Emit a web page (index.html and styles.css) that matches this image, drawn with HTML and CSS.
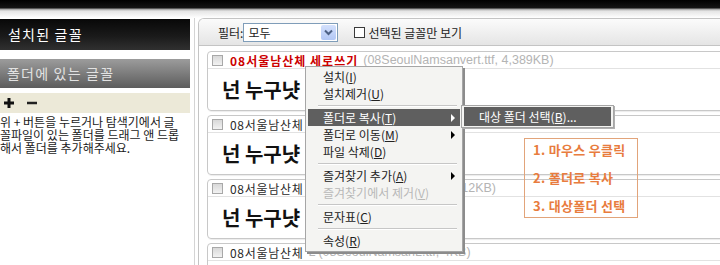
FILE: index.html
```html
<!DOCTYPE html>
<html>
<head>
    <title>글꼴 관리자</title>
    <meta charset="utf-8">
    <link rel="stylesheet" href="styles.css">
</head>
<body>
    <div class="topbar"></div>
    <div class="layout">
        <aside class="sidebar">
            <div class="side-tab installed">설치된 글꼴</div>
            <div class="side-tab folder">폴더에 있는 글꼴</div>
            <div class="side-tools">
                <svg width="12" height="12" viewBox="0 0 12 12"><path d="M6 1v10M1 6h10" stroke="#111" stroke-width="3"/></svg>
                <svg width="12" height="12" viewBox="0 0 12 12"><path d="M1 6h10" stroke="#222" stroke-width="2.5"/></svg>
            </div>
            <p class="side-help">위 + 버튼을 누르거나 탐색기에서 글<br>꼴파일이 있는 폴더를 드래그 앤 드롭<br>해서 폴더를 추가해주세요.</p>
        </aside>

        <main class="panel">
            <div class="filter-bar">
                <span class="filter-label">필터:</span>
                <div class="select">
                    <span class="select-value">모두</span>
                    <span class="select-btn">
                        <svg width="9" height="7" viewBox="0 0 9 7"><path d="M1 1.5l3.5 3.5 3.5-3.5" fill="none" stroke="#4d6185" stroke-width="2"/></svg>
                    </span>
                </div>
                <label class="only-selected"><span class="check white"></span>선택된 글꼴만 보기</label>
            </div>

            <div class="font-list">
                <div class="font-card">
                    <div class="font-head">
                        <span class="check"></span>
                        <span class="font-name selected">08서울남산체 세로쓰기</span>
                        <span class="font-file">(08SeoulNamsanvert.ttf, 4,389KB)</span>
                    </div>
                    <div class="font-preview">넌 누구냣</div>
                </div>
                <div class="font-card">
                    <div class="font-head">
                        <span class="check"></span>
                        <span class="font-name">08서울남산체</span>
                        <span class="font-file">B (08SeoulNamsanB.ttf)</span>
                    </div>
                    <div class="font-preview">넌 누구냣</div>
                </div>
                <div class="font-card">
                    <div class="font-head">
                        <span class="check"></span>
                        <span class="font-name">08서울남산체</span>
                        <span class="font-file">EB (08SeoulNamsanB.ttf, 412KB)</span>
                    </div>
                    <div class="font-preview">넌 누구냣</div>
                </div>
                <div class="font-card">
                    <div class="font-head">
                        <span class="check"></span>
                        <span class="font-name">08서울남산체</span>
                        <span class="font-file">L (08SeoulNamsanL.ttf, 4KB)</span>
                    </div>
                    <div class="font-preview">넌 누구냣</div>
                </div>
            </div>
        </main>
    </div>

    <!-- 우클릭 메뉴 -->
    <div class="ctx-menu">
        <div class="ctx-item">설치(<u>I</u>)</div>
        <div class="ctx-item">설치제거(<u>U</u>)</div>
        <div class="ctx-sep"></div>
        <div class="ctx-item sub active">폴더로 복사(<u>T</u>)</div>
        <div class="ctx-item sub">폴더로 이동(<u>M</u>)</div>
        <div class="ctx-item">파일 삭제(<u>D</u>)</div>
        <div class="ctx-sep"></div>
        <div class="ctx-item sub">즐겨찾기 추가(<u>A</u>)</div>
        <div class="ctx-item disabled">즐겨찾기에서 제거(<u>V</u>)</div>
        <div class="ctx-sep"></div>
        <div class="ctx-item">문자표(<u>C</u>)</div>
        <div class="ctx-sep"></div>
        <div class="ctx-item">속성(<u>R</u>)</div>
    </div>

    <div class="ctx-menu submenu">
        <div class="ctx-item active">대상 폴더 선택(<u>B</u>)...</div>
    </div>

    <div class="guide">
        <p>1. 마우스 우클릭</p>
        <p>2. 폴더로 복사</p>
        <p>3. 대상폴더 선택</p>
    </div>
</body>
</html>
```

FILE: styles.css
```css
body {
    margin: 0;
    width: 720px;
    height: 265px;
    overflow: hidden;
    position: relative;
    background: #fff;
    font-family: "Noto Sans CJK KR", sans-serif;
    font-size: 12px;
    color: #222;
}
.topbar {
    height: 18px;
    background: linear-gradient(#000 0, #141414 8px, #9a9a9a 9px, #e4e4e4 11px, #fff 18px);
}
.layout {
    display: flex;
    height: 247px;
}

/* 왼쪽 */
.sidebar {
    width: 195px;
    box-sizing: border-box;
    border-right: 1px solid #d4d4d4;
    padding-top: 1px;
}
.side-tab {
    width: 190px;
    box-sizing: border-box;
    padding-left: 8px;
    font-size: 14px;
    letter-spacing: 1.2px;
}
.side-tab.installed {
    height: 31px;
    line-height: 31px;
    color: #fff;
    background: linear-gradient(#080808, #1a1a1a 55%, #303030);
}
.side-tab.folder {
    height: 29px;
    line-height: 29px;
    margin-top: 9px;
    padding-left: 7px;
    color: #e2e2e2;
    background: linear-gradient(#9c9c9c, #7c7c7c 50%, #5c5c5c);
}
.side-tools {
    width: 190px;
    height: 20px;
    margin-top: 5px;
    padding-left: 3px;
    box-sizing: border-box;
    background: #ece9d8;
    display: flex;
    align-items: center;
    gap: 11px;
}
.side-help {
    margin: 2px 0 0;
    font-size: 12px;
    line-height: 13px;
    color: #1a1a1a;
    white-space: nowrap;
}

/* 오른쪽 */
.panel {
    flex: 1;
    margin-left: 3px;
    border-left: 1px solid #c4c4c4;
    border-top: 1px solid #c4c4c4;
    border-top-left-radius: 6px;
    overflow: hidden;
}
.filter-bar {
    height: 26px;
    display: flex;
    align-items: center;
    padding-left: 19px;
    background: linear-gradient(#fbfbfb, #e5e5e5);
    border-bottom: 1px solid #c4c4c4;
}
.select {
    width: 95px;
    height: 19px;
    box-sizing: border-box;
    border: 1px solid #7f9db9;
    background: #fff;
    display: flex;
    align-items: center;
    justify-content: space-between;
    padding-left: 4px;
}
.select-btn {
    width: 15px;
    height: 15px;
    margin-right: 1px;
    border-radius: 2px;
    background: linear-gradient(#d3e0fc, #b2c7f5);
    display: flex;
    align-items: center;
    justify-content: center;
}
.only-selected {
    margin-left: 16px;
    display: flex;
    align-items: center;
    gap: 3px;
}
.check {
    width: 11px;
    height: 11px;
    box-sizing: border-box;
    border: 1px solid #a8a8a8;
    background: linear-gradient(#d8d8d8, #f2f2f2);
    flex: none;
}
.check.white {
    border-color: #3a3a3a;
    background: #fff;
}

.font-list {
    padding: 5px 0 0 8px;
}
.font-card {
    width: 560px;
    height: 60px;
    box-sizing: border-box;
    border: 1px solid #c8c8c8;
    border-radius: 4px;
    margin-bottom: 4px;
    box-shadow: 1px 1px 1px rgba(0, 0, 0, 0.08);
}
.font-head {
    height: 16px;
    display: flex;
    align-items: center;
    padding-left: 4px;
    border-bottom: 1px solid #e2e2e2;
    white-space: nowrap;
}
.font-name {
    margin-left: 7px;
    letter-spacing: 0.7px;
    color: #2a2a2a;
}
.font-name.selected {
    color: #cc0000;
    font-weight: bold;
    letter-spacing: 1px;
}
.font-file {
    margin-left: 5px;
    color: #b4b4b4;
    font-family: "Liberation Sans", "Noto Sans CJK KR", sans-serif;
    font-size: 12.5px;
}
.font-preview {
    height: 41px;
    line-height: 41px;
    padding-left: 14px;
    font-size: 20px;
    font-weight: bold;
    color: #111;
}

/* 메뉴 */
.ctx-menu {
    position: absolute;
    left: 305px;
    top: 66px;
    width: 158px;
    box-sizing: border-box;
    padding: 1px 2px 2px;
    border: 1px solid #a6a6a6;
    background: #f4f4f2;
    box-shadow: 2px 2px 0 #8c8c8c;
}
.ctx-item {
    position: relative;
    height: 17px;
    line-height: 17px;
    padding-left: 15px;
    white-space: nowrap;
}
.ctx-item.active {
    background: #5f5f5f;
    color: #fff;
}
.ctx-item.disabled {
    color: #b8b8b8;
}
.ctx-item.sub::after {
    content: "";
    position: absolute;
    right: 5px;
    top: 5px;
    border-left: 4px solid #000;
    border-top: 4px solid transparent;
    border-bottom: 4px solid transparent;
}
.ctx-item.sub.active::after {
    border-left-color: #fff;
}
.ctx-sep {
    height: 7px;
    margin: 0 3px 0 10px;
    background: linear-gradient(transparent 3px, #c6c6c6 3px, #c6c6c6 4px, #fff 4px, #fff 5px, transparent 5px);
}
.submenu {
    left: 461px;
    top: 105px;
    width: 153px;
    padding: 1px 2px;
    box-shadow: 1px 1px 0 #b0b0b0;
}
.submenu .ctx-item {
    height: 19px;
    line-height: 19px;
}

/* 안내 */
.guide {
    position: absolute;
    left: 524px;
    top: 138px;
    width: 114px;
    height: 80px;
    box-sizing: border-box;
    border: 1px solid #e2a47a;
    padding-left: 8px;
}
.guide p {
    margin: 0 0 6px;
    line-height: 22px;
    font-size: 13px;
    letter-spacing: 0.3px;
    font-weight: bold;
    color: #e87c3e;
    white-space: nowrap;
}
```
